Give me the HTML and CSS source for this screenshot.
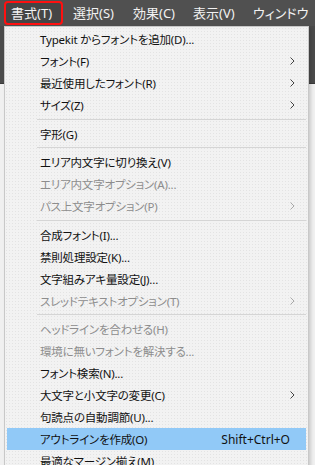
FILE: index.html
```html
<!DOCTYPE html>
<html lang="ja">
<head>
<meta charset="utf-8">
<link rel="stylesheet" href="styles.css">
</head>
<body>
<div class="app">
  <nav class="menubar">
    <span class="mb-item active">書式(T)</span>
    <span class="mb-item">選択(S)</span>
    <span class="mb-item">効果(C)</span>
    <span class="mb-item">表示(V)</span>
    <span class="mb-item">ウィンドウ</span>
  </nav>
  <div class="workspace">
    <div class="toolbar"></div>
    <div class="canvas"></div>
  </div>

  <div class="menu">
    <div class="row">Typekit からフォントを追加(D)...</div>
    <div class="row sub">フォント(F)<svg class="chev" viewBox="0 0 5 8"><polyline points="0.5,0.5 4,4 0.5,7.5"/></svg></div>
    <div class="row sub">最近使用したフォント(R)<svg class="chev" viewBox="0 0 5 8"><polyline points="0.5,0.5 4,4 0.5,7.5"/></svg></div>
    <div class="row sub">サイズ(Z)<svg class="chev" viewBox="0 0 5 8"><polyline points="0.5,0.5 4,4 0.5,7.5"/></svg></div>
    <div class="sep"></div>
    <div class="row">字形(G)</div>
    <div class="sep"></div>
    <div class="row">エリア内文字に切り換え(V)</div>
    <div class="row dis">エリア内文字オプション(A)...</div>
    <div class="row dis sub">パス上文字オプション(P)<svg class="chev" viewBox="0 0 5 8"><polyline points="0.5,0.5 4,4 0.5,7.5"/></svg></div>
    <div class="sep"></div>
    <div class="row">合成フォント(I)...</div>
    <div class="row">禁則処理設定(K)...</div>
    <div class="row">文字組みアキ量設定(J)...</div>
    <div class="row dis sub">スレッドテキストオプション(T)<svg class="chev" viewBox="0 0 5 8"><polyline points="0.5,0.5 4,4 0.5,7.5"/></svg></div>
    <div class="sep"></div>
    <div class="row dis">ヘッドラインを合わせる(H)</div>
    <div class="row dis">環境に無いフォントを解決する...</div>
    <div class="row">フォント検索(N)...</div>
    <div class="row sub">大文字と小文字の変更(C)<svg class="chev" viewBox="0 0 5 8"><polyline points="0.5,0.5 4,4 0.5,7.5"/></svg></div>
    <div class="row">句読点の自動調節(U)...</div>
    <div class="row hl"><span>アウトラインを作成(O)</span><span class="key">Shift+Ctrl+O</span></div>
    <div class="row">最適なマージン揃え(M)</div>
  </div>
</div>
</body>
</html>
```

FILE: styles.css
```css
* { box-sizing: border-box; }
html, body { margin: 0; padding: 0; }
body {
  width: 315px;
  height: 465px;
  overflow: hidden;
  background: #f0f0f0;
  font-family: "Segoe UI", "Noto Sans", "Noto Sans CJK JP", sans-serif;
  font-feature-settings: "palt" 1;
}
.app {
  position: relative;
  width: 315px;
  height: 465px;
  display: flex;
  flex-direction: column;
}
.menubar {
  height: 26px;
  background: #505050;
  display: flex;
  align-items: center;
  padding-left: 4px;
}
.mb-item {
  color: #f2f2f2;
  font-size: 13px;
  width: 60px;
  padding-left: 7px;
  height: 24px;
  line-height: 21px;
  border: 2px solid transparent;
  white-space: nowrap;
}
.mb-item.active {
  border-color: #ff1010;
  border-radius: 4px;
  background: #454545;
  width: 59px;
  padding-left: 5px;
  margin-right: 1px;
}
.workspace {
  flex: 1;
  display: flex;
  flex-direction: column;
}
.toolbar {
  height: 58px;
  background: #4a4a4a;
  border-bottom: 1px solid #3a3a3a;
}
.canvas {
  flex: 1;
  background: #f0f0f0;
}
.menu {
  position: absolute;
  left: 4px;
  top: 26px;
  width: 305px;
  background-color: #f2f2f2;
  background-image:
    radial-gradient(circle, #e3e3e3 0.7px, transparent 0.9px),
    linear-gradient(#f2f2f2, #f2f2f2);
  background-size: 3px 3px, 100% 100%;
  background-repeat: repeat, no-repeat;
  background-position: 0 0, 31px 0;
  border: 1px solid #c8c8c8;
  padding: 1px 2px 2px 2px;
  box-shadow: 2px 2px 3px rgba(0,0,0,0.15);
}
.row {
  height: 22px;
  display: flex;
  align-items: center;
  padding-left: 33px;
  padding-right: 10px;
  font-size: 11.5px;
  letter-spacing: -0.2px;
  color: #111;
  white-space: nowrap;
}
.row.dis { color: #8d8d8d; }
.row.sub { justify-content: space-between; }
.row.hl {
  background: #91c9f7;
  justify-content: space-between;
  padding-right: 16px;
}
.key { font-size: 12px; letter-spacing: 0; }
.chev {
  width: 5px;
  height: 8px;
  fill: none;
  stroke: #444;
  stroke-width: 1;
  margin-right: 1px;
}
.row.dis .chev { stroke: #a8a8a8; }
.sep {
  height: 6.5px;
  display: flex;
  align-items: center;
  padding-left: 30px;
}
.sep::after {
  content: "";
  display: block;
  flex: 1;
  height: 1px;
  background: #d5d5d5;
}
```
